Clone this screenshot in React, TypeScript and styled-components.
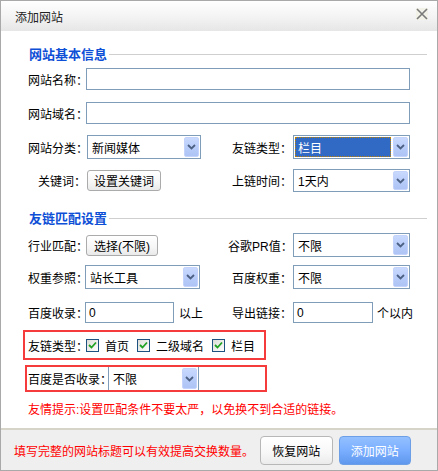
import React from 'react';
import styled, { createGlobalStyle } from 'styled-components';

const GlobalStyle = createGlobalStyle`
  html, body {
    margin: 0;
    padding: 0;
    background: #ffffff;
  }
  body {
    font-family: 'Liberation Sans', 'Noto Sans CJK SC', sans-serif;
    font-size: 12px;
    color: #000;
  }
`;

const Dialog = styled.div`
  width: 438px;
  height: 471px;
  box-sizing: border-box;
  border: 1px solid #a9a9a9;
  background: #fff;
  display: flex;
  flex-direction: column;
`;

const TitleBar = styled.div`
  height: 30px;
  flex-shrink: 0;
  display: flex;
  align-items: center;
  justify-content: space-between;
  padding: 0 9px 0 14px;
  background: linear-gradient(to bottom, #ffffff 0%, #f3f3f3 55%, #e6e6e6 100%);
`;

const Title = styled.span`
  font-size: 12px;
  color: #222;
`;

const CloseBtn = styled.span`
  width: 12px;
  height: 12px;
  display: flex;
  margin-top: -4px;
  background: #f2f2e8;
`;

const Body = styled.div`
  padding: 14px 10px 0 27px;
  display: flex;
  flex-direction: column;
`;

const SectionHead = styled.div<{ $mt?: number }>`
  display: flex;
  align-items: center;
  height: 16px;
  margin-top: ${({ $mt }) => $mt ?? 0}px;
  margin-left: 1px;

  span {
    font-size: 13px;
    font-weight: bold;
    color: #0d4fd6;
    white-space: nowrap;
  }

  i {
    flex: 1;
    height: 1px;
    margin-left: 2px;
    margin-top: 2px;
    background: #cfcfcf;
  }
`;

const Row = styled.div<{ $mt: number; $h: number }>`
  display: flex;
  align-items: center;
  height: ${({ $h }) => $h}px;
  margin-top: ${({ $mt }) => $mt}px;
`;

const Col = styled.div<{ $w?: number }>`
  display: flex;
  align-items: center;
  height: 100%;
  width: ${({ $w }) => ($w ? `${$w}px` : 'auto')};
  flex-shrink: 0;
`;

const Label = styled.span<{ $w: number }>`
  width: ${({ $w }) => $w}px;
  flex-shrink: 0;
  text-align: right;
  white-space: nowrap;
  padding-right: 1px;
  box-sizing: border-box;
`;

const TextInput = styled.div<{ $w: number; $h?: number }>`
  width: ${({ $w }) => $w}px;
  height: ${({ $h }) => $h ?? 22}px;
  box-sizing: border-box;
  border: 1px solid #7f9db9;
  background: #fff;
  padding: 0 3px;
  display: flex;
  align-items: center;
  font-size: 12px;
`;

const Suffix = styled.span<{ $ml: number }>`
  margin-left: ${({ $ml }) => $ml}px;
  white-space: nowrap;
`;

const SelectBox = styled.div<{ $w: number; $h: number; $sides?: boolean }>`
  width: ${({ $w }) => $w}px;
  height: ${({ $h }) => $h}px;
  box-sizing: border-box;
  border: 1px solid #7f9db9;
  ${({ $sides }) =>
    $sides &&
    `
    border-top: none;
    border-bottom: none;
  `}
  background: #fff;
  display: flex;
  align-items: stretch;
  padding: 1px;
`;

const SelectText = styled.div<{ $active?: boolean }>`
  flex: 1;
  display: flex;
  align-items: center;
  padding-left: 3px;
  margin-right: 2px;
  white-space: nowrap;
  ${({ $active }) =>
    $active &&
    `
    background: #316ac5;
    color: #fff;
    outline: 1px dotted #c08000;
    outline-offset: -1px;
  `}
`;

const ArrowBtn = styled.div`
  width: 15px;
  box-sizing: border-box;
  border: 1px solid #c3d3fb;
  border-radius: 2px;
  background: linear-gradient(to bottom, #c9d9fe 0%, #b6cbf8 60%, #aec4f5 100%);
  display: flex;
  align-items: center;
  justify-content: center;
`;

const Btn = styled.div<{ $w: number; $h: number; $ml?: number }>`
  width: ${({ $w }) => $w}px;
  height: ${({ $h }) => $h}px;
  box-sizing: border-box;
  margin-left: ${({ $ml }) => $ml ?? 0}px;
  border: 1px solid #ababab;
  border-radius: 3px;
  background: linear-gradient(to bottom, #ffffff 0%, #f6f6f6 60%, #e9e9e9 100%);
  display: flex;
  align-items: center;
  justify-content: center;
  white-space: nowrap;
`;

const RedBox = styled.div<{ $mt: number; $ml: number; $w: number; $h: number; $pl: number }>`
  margin-top: ${({ $mt }) => $mt}px;
  margin-left: ${({ $ml }) => $ml}px;
  width: ${({ $w }) => $w}px;
  height: ${({ $h }) => $h}px;
  box-sizing: border-box;
  border: 2px solid #f53b3b;
  display: flex;
  align-items: center;
  padding-left: ${({ $pl }) => $pl}px;
`;

const Check = styled.span`
  width: 13px;
  height: 13px;
  box-sizing: border-box;
  border: 1px solid #1c5180;
  background: linear-gradient(to bottom right, #dcdcd7, #ffffff);
  display: inline-flex;
  align-items: center;
  justify-content: center;
  margin-right: 6px;
  flex-shrink: 0;
`;

const CheckText = styled.span`
  margin-right: 8px;
  white-space: nowrap;
`;

const Tip = styled.div`
  margin-top: 10px;
  height: 16px;
  line-height: 16px;
  color: #ff0000;
  white-space: nowrap;
`;

const Footer = styled.div`
  margin-top: auto;
  height: 42px;
  box-sizing: border-box;
  border-top: 2px solid #d6d3c9;
  background: #efefef;
  display: flex;
  align-items: center;
  padding: 0 26px 0 13px;
`;

const FooterNote = styled.span`
  color: #ff0000;
  flex: 1;
  white-space: nowrap;
`;

const FooterBtn = styled.div<{ $primary?: boolean }>`
  width: 73px;
  height: 29px;
  box-sizing: border-box;
  border-radius: 4px;
  display: flex;
  align-items: center;
  justify-content: center;
  margin-left: 6px;
  font-size: 12px;
  border: 1px solid ${({ $primary }) => ($primary ? '#6d9fe6' : '#b7b7b7')};
  color: ${({ $primary }) => ($primary ? '#fff' : '#000')};
  background: ${({ $primary }) =>
    $primary
      ? 'linear-gradient(to bottom, #94c0ff 0%, #7aaeff 50%, #5f98ee 100%)'
      : 'linear-gradient(to bottom, #ffffff 0%, #f7f7f7 60%, #ebebeb 100%)'};
`;

const Chevron = () => (
  <svg width="9" height="6" viewBox="0 0 9 6">
    <path d="M1 1 L4.5 4.5 L8 1" fill="none" stroke="#4d6185" strokeWidth="1.8" />
  </svg>
);

const Tick = () => (
  <svg width="9" height="8" viewBox="0 0 9 8">
    <path d="M1 4 L3.5 6.5 L8 1.5" fill="none" stroke="#21a121" strokeWidth="1.8" />
  </svg>
);

type SelectProps = {
  w: number;
  h: number;
  value: string;
  active?: boolean;
  sides?: boolean;
};

const FakeSelect = ({ w, h, value, active, sides }: SelectProps) => (
  <SelectBox $w={w} $h={h} $sides={sides}>
    <SelectText $active={active}>{value}</SelectText>
    <ArrowBtn>
      <Chevron />
    </ArrowBtn>
  </SelectBox>
);

const CheckItem = ({ text }: { text: string }) => (
  <>
    <Check>
      <Tick />
    </Check>
    <CheckText>{text}</CheckText>
  </>
);

export default function App() {
  return (
    <>
      <GlobalStyle />
      <Dialog>
        <TitleBar>
          <Title>添加网站</Title>
          <CloseBtn>
            <svg width="12" height="12" viewBox="0 0 12 12">
              <path d="M1 1 L11 11 M11 1 L1 11" stroke="#7a7a7a" strokeWidth="1.6" />
            </svg>
          </CloseBtn>
        </TitleBar>

        <Body>
          <SectionHead>
            <span>网站基本信息</span>
            <i />
          </SectionHead>

          <Row $mt={7} $h={22}>
            <Label $w={58}>网站名称：</Label>
            <TextInput $w={324} />
          </Row>

          <Row $mt={12} $h={22}>
            <Label $w={58}>网站域名：</Label>
            <TextInput $w={324} />
          </Row>

          <Row $mt={11} $h={24}>
            <Col $w={200}>
              <Label $w={59}>网站分类：</Label>
              <FakeSelect w={114} h={24} value="新闻媒体" />
            </Col>
            <Col>
              <Label $w={65}>友链类型：</Label>
              <FakeSelect w={117} h={24} value="栏目" active />
            </Col>
          </Row>

          <Row $mt={10} $h={23}>
            <Col $w={200}>
              <Label $w={59}>关键词：</Label>
              <Btn $w={74} $h={21}>设置关键词</Btn>
            </Col>
            <Col>
              <Label $w={65}>上链时间：</Label>
              <FakeSelect w={117} h={23} value="1天内" />
            </Col>
          </Row>

          <SectionHead $mt={17}>
            <span>友链匹配设置</span>
            <i />
          </SectionHead>

          <Row $mt={8} $h={24}>
            <Col $w={200}>
              <Label $w={58}>行业匹配：</Label>
              <Btn $w={72} $h={21}>选择(不限)</Btn>
            </Col>
            <Col>
              <Label $w={65}>谷歌PR值：</Label>
              <FakeSelect w={117} h={24} value="不限" />
            </Col>
          </Row>

          <Row $mt={8} $h={24}>
            <Col $w={200}>
              <Label $w={57}>权重参照：</Label>
              <FakeSelect w={115} h={24} value="站长工具" />
            </Col>
            <Col>
              <Label $w={65}>百度权重：</Label>
              <FakeSelect w={117} h={24} value="不限" />
            </Col>
          </Row>

          <Row $mt={13} $h={21}>
            <Col $w={200}>
              <Label $w={57}>百度收录：</Label>
              <TextInput $w={89} $h={21}>0</TextInput>
              <Suffix $ml={5}>以上</Suffix>
            </Col>
            <Col>
              <Label $w={65}>导出链接：</Label>
              <TextInput $w={80} $h={21}>0</TextInput>
              <Suffix $ml={4}>个以内</Suffix>
            </Col>
          </Row>

          <RedBox $mt={7} $ml={-5} $w={243} $h={30} $pl={3}>
            <Label $w={56}>友链类型：</Label>
            <span style={{ width: 2 }} />
            <CheckItem text="首页" />
            <CheckItem text="二级域名" />
            <CheckItem text="栏目" />
          </RedBox>

          <RedBox $mt={5} $ml={-3} $w={242} $h={27} $pl={1}>
            <Label $w={80}>百度是否收录：</Label>
            <FakeSelect w={91} h={23} value="不限" sides />
          </RedBox>

          <Tip>友情提示:设置匹配条件不要太严，以免换不到合适的链接。</Tip>
        </Body>

        <Footer>
          <FooterNote>填写完整的网站标题可以有效提高交换数量。</FooterNote>
          <FooterBtn>恢复网站</FooterBtn>
          <FooterBtn $primary>添加网站</FooterBtn>
        </Footer>
      </Dialog>
    </>
  );
}
